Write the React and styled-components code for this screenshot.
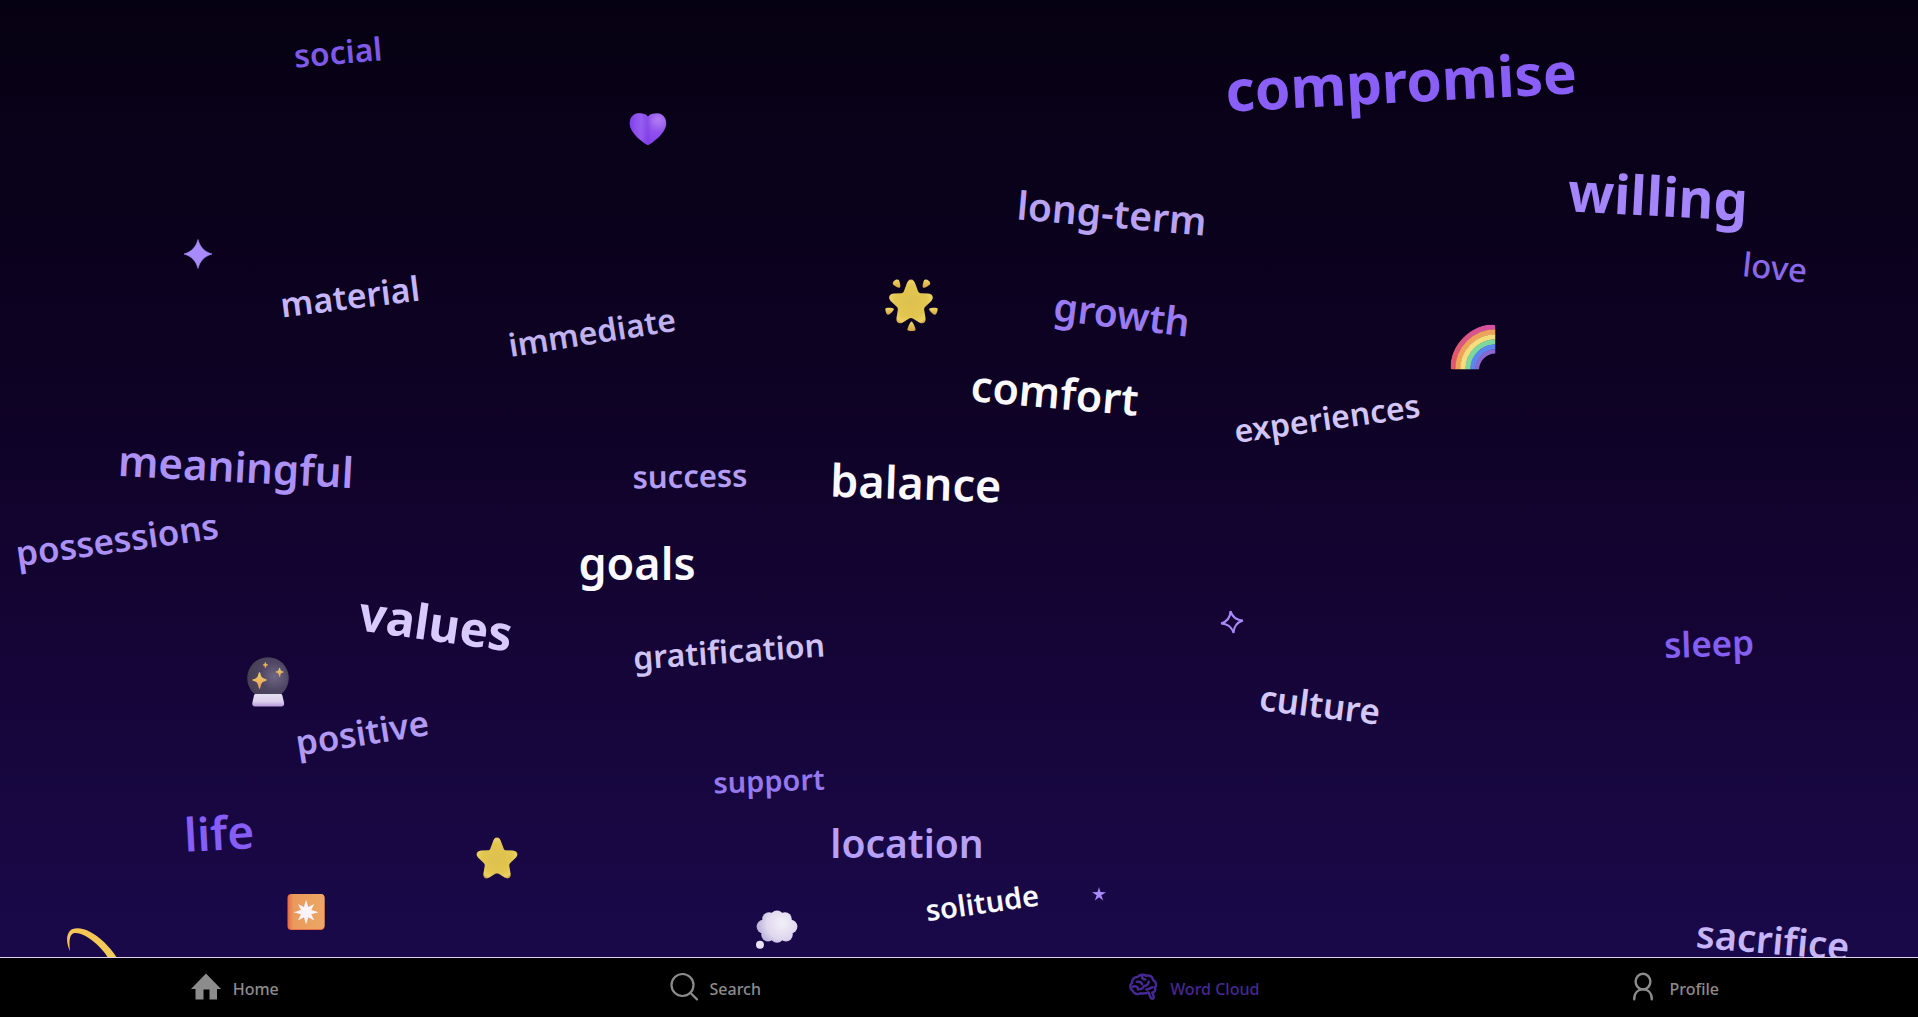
import React from "react";
import styled, { createGlobalStyle } from "styled-components";

const GlobalStyle = createGlobalStyle`
  * { box-sizing: border-box; }
  body { margin: 0; background: #000; }
`;

/* Words and decorations are placed on this canvas and scale with the stage. */
const CANVAS = { width: 1918, height: 957 };

const WORDS = [
  { text: "social", x: 338, y: 52, turn: -5, size: 32, color: "#7f5ae6" },
  { text: "compromise", x: 1401, y: 81, turn: -3, size: 57, weight: 700, color: "#8a5ff8" },
  { text: "willing", x: 1658, y: 195, turn: 3, size: 54, weight: 700, color: "#a485fb" },
  { text: "long-term", x: 1112, y: 212, turn: 5, size: 39, color: "#b7a3f2" },
  { text: "love", x: 1775, y: 267, turn: 6, size: 33, weight: 500, color: "#8a68ea" },
  { text: "material", x: 350, y: 296, turn: -7, size: 34, color: "#c6b5f8" },
  { text: "growth", x: 1122, y: 313, turn: 7, size: 39, color: "#9b7bf2" },
  { text: "immediate", x: 592, y: 332, turn: -9, size: 32, color: "#c0b2ee" },
  { text: "comfort", x: 1055, y: 392, turn: 5, size: 43, color: "#fbf9ff" },
  { text: "experiences", x: 1327, y: 418, turn: -8, size: 32, color: "#d2c6f8" },
  { text: "meaningful", x: 236, y: 466, turn: 3, size: 42, color: "#ac91f6" },
  { text: "success", x: 690, y: 476, turn: -1, size: 31, color: "#b49df4" },
  { text: "balance", x: 916, y: 482, turn: 2, size: 45, color: "#fbf9ff" },
  { text: "possessions", x: 117, y: 539, turn: -8, size: 35, color: "#ab91f5" },
  { text: "goals", x: 637, y: 562, turn: 0, size: 45, color: "#fcfaff" },
  { text: "values", x: 436, y: 623, turn: 8, size: 48, weight: 700, color: "#d8cafd" },
  { text: "sleep", x: 1709, y: 643, turn: -2, size: 35, color: "#845ff0" },
  { text: "gratification", x: 729, y: 651, turn: -4, size: 32, color: "#cfc3f6" },
  { text: "culture", x: 1320, y: 704, turn: 7, size: 35, color: "#d3c8f8" },
  { text: "positive", x: 362, y: 732, turn: -9, size: 35, color: "#b09af2" },
  { text: "support", x: 769, y: 780, turn: -2, size: 29, color: "#9478ec" },
  { text: "life", x: 219, y: 832, turn: -3, size: 46, color: "#865ef6" },
  { text: "location", x: 907, y: 842, turn: 0, size: 39, color: "#b7a0f8" },
  { text: "solitude", x: 982, y: 902, turn: -8, size: 29, color: "#faf8ff" },
  { text: "sacrifice", x: 1773, y: 939, turn: 5, size: 38, color: "#c6b5f9" },
];

const Page = styled.div`
  display: flex;
  flex-direction: column;
  min-height: 100vh;
  font-family: "Noto Sans", "Open Sans", sans-serif;
`;

const Stage = styled.main`
  position: relative;
  flex: 1;
  overflow: hidden;
  background: linear-gradient(180deg, #060112 0%, #0e0224 40%, #150538 70%, #1a094a 100%);
`;

const Pinned = styled.span`
  position: absolute;
  left: ${(p) => (p.$x / CANVAS.width) * 100}%;
  top: ${(p) => (p.$y / CANVAS.height) * 100}%;
  transform: translate(-50%, -50%) rotate(${(p) => p.$turn || 0}deg);
`;

const Word = styled(Pinned)`
  color: ${(p) => p.$color};
  font-size: ${(p) => p.$size}px;
  font-weight: ${(p) => p.$weight || 600};
  line-height: 1;
  white-space: nowrap;
`;

const Sticker = styled(Pinned)`
  display: flex;
  svg { display: block; overflow: visible; }
`;

const Nav = styled.nav`
  display: grid;
  grid-template-columns: repeat(4, 1fr);
  height: 60px;
  background: #000;
  border-top: 1px solid #ddd6f3;
`;

const NavLink = styled.a`
  display: flex;
  align-items: center;
  justify-content: center;
  color: ${(p) => (p.$active ? "#452893" : "#8c8c8c")};
  font-size: 16px;
  font-weight: 500;
  line-height: 20px;
  text-decoration: none;
`;

const NavIcon = styled.svg`
  width: 32px;
  height: 32px;
  flex: none;
  fill: none;
  stroke: currentColor;
  stroke-linecap: round;
  stroke-linejoin: round;
`;

const NavLabel = styled.span`
  margin: 3px 10px 0;
`;

const STAR =
  "M25 3 C27.5 3 28.6 5 29.6 8 L32 14.5 C32.5 16 33.2 16.6 34.8 16.7 L42 17 C46.5 17.4 48.5 21 45.4 24.4 L39.5 30 C38.3 31.2 38 32 38.2 33.6 L39.6 42 C40.1 46.4 36.6 48 33.2 46 L26.8 42 C25.6 41.3 24.4 41.3 23.2 42 L16.8 46 C13.4 48 9.9 46.4 10.4 42 L11.8 33.6 C12 32 11.7 31.2 10.5 30 L4.6 24.4 C1.5 21 3.5 17.4 8 17 L15.2 16.7 C16.8 16.6 17.5 16 18 14.5 L20.4 8 C21.4 5 22.5 3 25 3 Z";

function Gradients() {
  return (
    <defs>
      <radialGradient id="gold" cx="50%" cy="52%" r="55%">
        <stop offset="0" stopColor="#ddc04e" />
        <stop offset="0.65" stopColor="#e2c650" />
        <stop offset="0.88" stopColor="#ecd164" />
        <stop offset="1" stopColor="#c79a45" />
      </radialGradient>
      <linearGradient id="ray" x1="0" y1="0" x2="0" y2="1">
        <stop offset="0" stopColor="#f0d866" />
        <stop offset="1" stopColor="#d2a544" />
      </linearGradient>
      <radialGradient id="heartFill" cx="78%" cy="22%" r="85%">
        <stop offset="0" stopColor="#b37cf2" />
        <stop offset="0.45" stopColor="#8f50ee" />
        <stop offset="1" stopColor="#843eee" />
      </radialGradient>
      <linearGradient id="heartShade" x1="0" y1="0" x2="1" y2="0">
        <stop offset="0" stopColor="#7a3fe6" stopOpacity="0.8" />
        <stop offset="0.32" stopColor="#a26cf4" stopOpacity="0.5" />
        <stop offset="0.5" stopColor="#7438dc" stopOpacity="0.4" />
        <stop offset="0.65" stopColor="#9a5cf0" stopOpacity="0" />
      </linearGradient>
      <radialGradient id="orb" cx="66%" cy="46%" r="62%">
        <stop offset="0" stopColor="#6f6783" />
        <stop offset="0.55" stopColor="#4f4664" />
        <stop offset="1" stopColor="#474054" />
      </radialGradient>
      <linearGradient id="spark" x1="0" y1="0" x2="0" y2="1">
        <stop offset="0" stopColor="#e9cf6b" />
        <stop offset="1" stopColor="#f09f55" />
      </linearGradient>
      <linearGradient id="stand" x1="0" y1="0" x2="0" y2="1">
        <stop offset="0" stopColor="#e6def2" />
        <stop offset="0.6" stopColor="#ddd0ee" />
        <stop offset="1" stopColor="#b698d8" />
      </linearGradient>
      <linearGradient id="tile" x1="0" y1="0" x2="1" y2="0">
        <stop offset="0" stopColor="#e8734a" />
        <stop offset="0.14" stopColor="#ea9a5c" />
        <stop offset="1" stopColor="#eda763" />
      </linearGradient>
      <radialGradient id="puff" gradientUnits="userSpaceOnUse" cx="26" cy="12" r="26">
        <stop offset="0" stopColor="#f3f0f8" />
        <stop offset="0.6" stopColor="#dfd8ee" />
        <stop offset="1" stopColor="#b8acd6" />
      </radialGradient>
      <linearGradient id="bowRed" gradientUnits="userSpaceOnUse" x1="0" y1="45" x2="45" y2="0">
        <stop offset="0" stopColor="#e25a5c" />
        <stop offset="1" stopColor="#d450a8" />
      </linearGradient>
      <linearGradient id="trail" x1="0" y1="0" x2="1" y2="1">
        <stop offset="0" stopColor="#f6c453" />
        <stop offset="1" stopColor="#f2cf5b" />
      </linearGradient>
    </defs>
  );
}

function Heart() {
  const d =
    "M18.5 32 C17 32 1 21.5 0.3 11 C0 4.5 4.2 0.3 9.2 0.3 C13.6 0.3 17 1.2 18.5 3.8 C20 1.2 23.4 0.3 27.8 0.3 C32.8 0.3 37 4.5 36.7 11 C36 21.5 20 32 18.5 32 Z";
  return (
    <svg width="37" height="32" viewBox="0 0 37 32" aria-hidden="true">
      <path d={d} fill="url(#heartFill)" />
      <path d={d} fill="url(#heartShade)" />
    </svg>
  );
}

function GlowingStar() {
  return (
    <svg width="54" height="52" viewBox="0 0 54 52" aria-hidden="true">
      <path d={STAR} fill="url(#gold)" transform="translate(1 -2.5)" />
      <path d="M26.5 42.5 C27.8 42.5 30.6 49 30.6 50.8 C30.6 52.4 22.4 52.4 22.4 50.8 C22.4 49 25.2 42.5 26.5 42.5 Z" fill="url(#ray)" />
      <path d="M8.5 2.5 C10 0.4 13 0 13.8 1 C14.6 2.2 16 7.6 15 8.6 C14 9.5 8.6 6.4 8 5.2 C7.6 4.2 8 3.2 8.5 2.5 Z" fill="url(#ray)" />
      <path d="M44.5 2.5 C43 0.4 40 0 39.2 1 C38.4 2.2 37 7.6 38 8.6 C39 9.5 44.4 6.4 45 5.2 C45.4 4.2 45 3.2 44.5 2.5 Z" fill="url(#ray)" />
      <path d="M0.4 29.6 C0.6 28.4 7.6 28.6 8.8 29.8 C9.6 31 5 35.6 3.2 35.8 C1.2 35.9 0 31 0.4 29.6 Z" fill="url(#ray)" />
      <path d="M52.6 29.6 C52.4 28.4 45.4 28.6 44.2 29.8 C43.4 31 48 35.6 49.8 35.8 C51.8 35.9 53 31 52.6 29.6 Z" fill="url(#ray)" />
    </svg>
  );
}

function Star() {
  return (
    <svg width="42" height="42" viewBox="3 2.5 44 45" aria-hidden="true">
      <path d={STAR} fill="url(#gold)" />
    </svg>
  );
}

function Rainbow() {
  const bands = ["url(#bowRed)", "#eda35a", "#f5dc7c", "#7fd79b", "#5a86ee", "#8a68cf"];
  return (
    <svg width="45" height="45" viewBox="0 0 45 45" aria-hidden="true">
      <clipPath id="bowClip">
        <path d="M0 43 C0 19 19 0 42.5 0 Q45 0 45 2.5 V29 C36 29 29 36 28.5 45 H2 Q0 45 0 43 Z" />
      </clipPath>
      <g clipPath="url(#bowClip)" fill="none" strokeWidth="5.4">
        {bands.map((c, i) => (
          <circle key={c} cx="45" cy="45" r={42.6 - i * 5} stroke={c} />
        ))}
      </g>
    </svg>
  );
}

function CrystalBall() {
  const spark = "M0 -7 C1 -2.4 2 -1.2 6.4 0 C2 1.2 1 2.4 0 8 C-1 2.4 -2 1.2 -6.4 0 C-2 -1.2 -1 -2.4 0 -7 Z";
  return (
    <svg width="42" height="50" viewBox="0 0 42 50" aria-hidden="true">
      <circle cx="21" cy="21" r="20.8" fill="url(#orb)" />
      <g fill="url(#spark)" stroke="url(#spark)" strokeLinejoin="round" strokeWidth="1.4">
        <path d={spark} transform="translate(12.5 23)" />
        <path d={spark} transform="translate(32.6 15) scale(0.58)" />
        <path d={spark} transform="translate(18.4 8) scale(0.38)" />
      </g>
      <path d="M8.6 37 H33.8 Q35 37 35.4 38.4 L37 45.5 Q37.6 49.4 34.5 49.4 H8 Q4.8 49.4 5.4 45.5 L7 38.4 Q7.4 37 8.6 37 Z" fill="url(#stand)" />
    </svg>
  );
}

function SparkTile() {
  const points = Array.from({ length: 16 }, (_, i) => {
    const r = i % 2 ? 5.6 : i % 4 ? 11.6 : 12.4;
    const a = (i * Math.PI) / 8;
    return `${18.6 + r * Math.sin(a)},${18.2 - r * Math.cos(a)}`;
  }).join(" ");
  return (
    <svg width="37" height="36" viewBox="0 0 37 36" aria-hidden="true">
      <rect width="37" height="36" rx="4" fill="#e46f48" />
      <rect x="1" y="0" width="36" height="35" rx="4" fill="url(#tile)" />
      <polygon points={points} fill="#fbf4fb" />
    </svg>
  );
}

function Thought() {
  const lobes = [[13, 8], [21, 6.4], [29, 8], [34.6, 15.6], [7.4, 15.6], [12, 23.6], [21, 25], [30, 23.6]];
  return (
    <svg width="42" height="38" viewBox="0 0 42 38" aria-hidden="true">
      <g fill="url(#puff)">
        <ellipse cx="21" cy="15.6" rx="16" ry="12" />
        {lobes.map(([x, y]) => (
          <circle key={`${x}-${y}`} cx={x} cy={y} r="6.8" />
        ))}
      </g>
      <circle cx="4" cy="33.8" r="4" fill="#e9e3f3" />
    </svg>
  );
}

function Trail() {
  return (
    <svg width="54" height="40" viewBox="0 0 54 40" aria-hidden="true">
      <path
        d="M3 23 C-1 15 -1.5 4.5 5.5 1 C14 -2 26 3.5 37 14 C45 22 51 30 55 40 L46 40 C42 30 37 23 30 16.5 C21 8 11 3.4 6 5.4 C2.2 7.4 2 15 3 23 Z"
        fill="url(#trail)"
      />
    </svg>
  );
}

function SolidSparkle() {
  return (
    <svg width="28" height="29" viewBox="0 0 28 29" aria-hidden="true">
      <path d="M14 0 C15.8 7 20 12.2 28 14.5 C20 16.8 15.8 22 14 29 C12.2 22 8 16.8 0 14.5 C8 12.2 12.2 7 14 0 Z" fill="#a78bfa" stroke="#a78bfa" strokeWidth="0.6" />
    </svg>
  );
}

function OpenSparkle() {
  return (
    <svg width="26" height="26" viewBox="0 0 26 26" aria-hidden="true">
      <path d="M13 2 C14 8 17.5 11.8 24 13 C17.5 14.2 14 18 13 24 C12 18 8.5 14.2 2 13 C8.5 11.8 12 8 13 2 Z" fill="none" stroke="#a78bfa" strokeWidth="2" />
    </svg>
  );
}

function TinyStar() {
  return (
    <svg width="14" height="14" viewBox="0 0 14 14" aria-hidden="true">
      <path d="M7 0 L8.4 5 L14 5.2 L9.3 8.2 L11.2 13.6 L7 10.2 L2.8 13.6 L4.7 8.2 L0 5.2 L5.6 5 Z" fill="#a78bfa" />
    </svg>
  );
}

const STICKERS = [
  { Art: Heart, x: 648, y: 129 },
  { Art: SolidSparkle, x: 198, y: 254 },
  { Art: GlowingStar, x: 912, y: 305 },
  { Art: Rainbow, x: 1473, y: 347 },
  { Art: OpenSparkle, x: 1232, y: 622, turn: -8 },
  { Art: CrystalBall, x: 268, y: 682 },
  { Art: Star, x: 497, y: 858 },
  { Art: TinyStar, x: 1099, y: 894 },
  { Art: SparkTile, x: 306, y: 912 },
  { Art: Thought, x: 777, y: 930 },
  { Art: Trail, x: 94, y: 948 },
];

function HomeIcon() {
  return (
    <NavIcon viewBox="0 0 32 32" aria-hidden="true">
      <path d="M15 1.5 L30 17 H26 V27.5 H18.5 V17.5 H12.5 V27.5 H4.5 V17 H0 Z" fill="currentColor" stroke="none" />
    </NavIcon>
  );
}

function SearchIcon() {
  return (
    <NavIcon viewBox="0 0 32 32" strokeWidth="2.2" aria-hidden="true">
      <circle cx="14.5" cy="13" r="11" />
      <path d="M22.3 20.8 L29 27.4" />
    </NavIcon>
  );
}

function BrainIcon() {
  return (
    <NavIcon viewBox="0 0 32 32" strokeWidth="2.5" aria-hidden="true">
      <path d="M20.5 20.5 C17.5 21.4 15 21.8 12.5 21.2 C9.5 23 5.2 21.6 4.6 18.6 C1.6 17 1.6 12.6 4 11 C3.4 7.4 6.6 4.8 9.6 5 C11.8 2.4 16 2 18 3.8 C21.6 2.8 25 5 25.2 8.2 C28.4 9.8 28.8 13.6 27 15.6 C28 18 26.6 20.2 24.4 20.8" />
      <path d="M20.5 20.5 C21.8 23 22 25 23 26.2 C24 27.2 26 26.8 25.8 25 C25.6 23.4 24.6 22 24.4 20.8" />
      <path d="M14 4 C13.9 6.2 15 7.4 17.4 7.6 M9 9.8 C11.2 9.4 13.4 10.2 14 12.2 M4.6 15 C6.6 13.6 9.4 14.2 10 16.6 M10 17.6 C12.8 17.4 15.2 16.6 16 14 C18.6 13.8 20.6 12 20.8 9.4 M18.4 17.6 C21 17.6 22 15.6 24.6 15.2" />
    </NavIcon>
  );
}

function ProfileIcon() {
  return (
    <NavIcon viewBox="0 0 32 32" strokeWidth="2.4" aria-hidden="true">
      <ellipse cx="16" cy="9.6" rx="7.4" ry="7.8" />
      <path d="M7.2 27.2 C7.2 21 10.9 17.4 16 17.4 C21.1 17.4 24.8 21 24.8 27.2" />
    </NavIcon>
  );
}

const LINKS = [
  { label: "Home", Icon: HomeIcon },
  { label: "Search", Icon: SearchIcon },
  { label: "Word Cloud", Icon: BrainIcon, active: true },
  { label: "Profile", Icon: ProfileIcon },
];

export default function App() {
  return (
    <Page>
      <GlobalStyle />
      <Stage>
        <svg width="0" height="0" aria-hidden="true">
          <Gradients />
        </svg>
        {STICKERS.map(({ Art, x, y, turn }) => (
          <Sticker key={Art.name} $x={x} $y={y} $turn={turn}>
            <Art />
          </Sticker>
        ))}
        {WORDS.map((w) => (
          <Word key={w.text} $x={w.x} $y={w.y} $turn={w.turn} $size={w.size} $weight={w.weight} $color={w.color}>
            {w.text}
          </Word>
        ))}
      </Stage>
      <Nav>
        {LINKS.map(({ label, Icon, active }) => (
          <NavLink key={label} href="#" $active={active} aria-current={active ? "page" : undefined}>
            <Icon />
            <NavLabel>{label}</NavLabel>
          </NavLink>
        ))}
      </Nav>
    </Page>
  );
}
